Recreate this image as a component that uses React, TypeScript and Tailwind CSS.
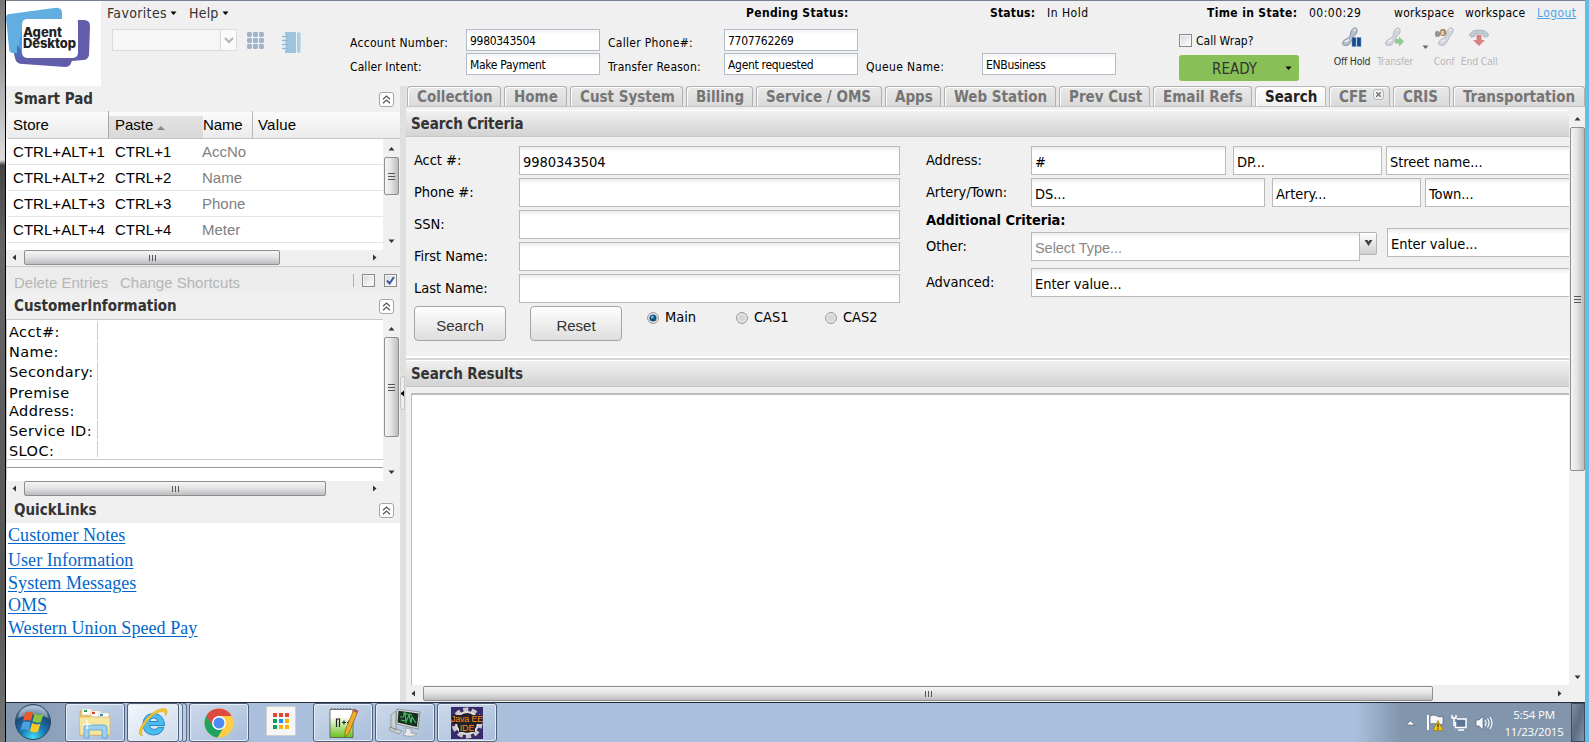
import React from "react";

const TAHOMA = "font-['DejaVu_Sans_Condensed','DejaVu_Sans',sans-serif]";
const ARIAL = "font-['Liberation_Sans',sans-serif]";

type ArrowDir = "up" | "down" | "left" | "right";

function Arrow({ dir, className = "" }: { dir: ArrowDir; className?: string }) {
  const points = {
    up: "0.5,5.5 3.5,2 6.5,5.5",
    down: "0.5,1.5 3.5,5 6.5,1.5",
    left: "5,0.5 1.5,3.5 5,6.5",
    right: "2,0.5 5.5,3.5 2,6.5",
  }[dir];
  return (
    <svg width="7" height="7" viewBox="0 0 7 7" className={`block shrink-0 ${className}`}>
      <polygon points={points} fill="currentColor" />
    </svg>
  );
}

function VScroll({ className, thumb }: { className: string; thumb: string }) {
  return (
    <div className={`flex w-[16px] shrink-0 flex-col items-center bg-[#f0f0f0] text-[#333] ${className}`}>
      <div className="flex h-[18px] shrink-0 items-center"><Arrow dir="up" /></div>
      <div className={`flex w-[15px] shrink-0 flex-col items-center justify-center gap-[2px] rounded-[2px] border border-[#8f8f8f] bg-linear-to-r from-[#f5f5f5] via-[#e2e2e4] to-[#bcbcc0] ${thumb}`}>
        <i className="h-[1px] w-[7px] bg-[#555]" />
        <i className="h-[1px] w-[7px] bg-[#555]" />
        <i className="h-[1px] w-[7px] bg-[#555]" />
      </div>
      <div className="grow" />
      <div className="flex h-[15px] shrink-0 items-center"><Arrow dir="down" /></div>
    </div>
  );
}

function HScroll({ className, thumb }: { className: string; thumb: string }) {
  return (
    <div className={`flex h-[16px] shrink-0 items-start bg-[#efefef] text-[#333] ${className}`}>
      <div className="flex h-[15px] w-[16px] shrink-0 items-center justify-center pr-[3px]"><Arrow dir="left" /></div>
      <div className={`flex h-[15px] shrink-0 items-center justify-center gap-[2px] rounded-[2px] border border-[#8f8f8f] bg-linear-to-b from-[#f5f5f5] via-[#e2e2e4] to-[#bcbcc0] ${thumb}`}>
        <i className="h-[6px] w-[1px] bg-[#555]" />
        <i className="h-[6px] w-[1px] bg-[#555]" />
        <i className="h-[6px] w-[1px] bg-[#555]" />
      </div>
      <div className="grow" />
      <div className="flex h-[15px] w-[19px] shrink-0 items-center justify-center"><Arrow dir="right" /></div>
    </div>
  );
}

function Collapse() {
  return (
    <button className="flex h-[15px] w-[15px] items-center justify-center rounded-[3px] border border-[#a5a5a5] bg-white text-[#555]">
      <svg width="9" height="9" viewBox="0 0 9 9" fill="none" stroke="currentColor" strokeWidth="1.2">
        <path d="M1 4.3 4.5 1 8 4.3M1 8.3 4.5 5 8 8.3" />
      </svg>
    </button>
  );
}

function PanelTitle({ children, className }: { children: string; className: string }) {
  return (
    <div className={`flex shrink-0 items-center justify-between bg-[#f0f0f0] pr-[6px] pl-[8px] text-[15px] font-bold text-[#333] ${className}`}>
      <h2>{children}</h2>
      <Collapse />
    </div>
  );
}

function Check({ on = false }: { on?: boolean }) {
  return (
    <span className="flex h-[13px] w-[13px] shrink-0 items-center justify-center border border-[#8a8a8a] bg-linear-to-br from-[#d5d8dc] to-white shadow-[inset_0_0_0_1px_#f4f4f4]">
      {on && (
        <svg width="9" height="9" viewBox="0 0 9 9" fill="none" stroke="#3a56a0" strokeWidth="2">
          <path d="M1 4.5 3.6 7.5 8 1" />
        </svg>
      )}
    </span>
  );
}

function CallField({ children }: { children?: string }) {
  return (
    <div className="h-[22px] w-[134px] shrink-0 border border-[#b3bdc9] bg-linear-to-b from-[#f3f3f3] to-white to-25% pl-[3px] text-[12px] leading-[22px] tracking-[-0.3px] text-black">
      {children}
    </div>
  );
}

function Field({ children, className = "" }: { children?: string; className?: string }) {
  return (
    <div className={`h-[29px] shrink-0 border border-[#bababa] bg-linear-to-b from-[#ededed] to-white to-20% pl-[3px] leading-[30px] ${className}`}>
      {children}
    </div>
  );
}

function Logo() {
  return (
    <div className="relative h-[85px] w-[95px] shrink-0 bg-white">
      <svg width="95" height="85" viewBox="6 1 95 85" className="block">
        <path d="M78 20h6q6 0 6 6l-1 29q-1 5-6 5l-11 1-1 2q-1 4-6 4l-42-3q-7 0-8-6l-1-5h8l5-10 46 2z" fill="#625dab" />
        <path d="M10 14 54 8q7-1 8 4v7l-32 1q-8 0-8 7l-4 26h-5q-4 0-4-5L6 18q0-4 4-4z" fill="#62aee1" />
        <path d="M22 27q-1-6 6-7l-6 33h-5z" fill="#4aa0dc" />
        <path d="M17 45v8h-3l1 3q4 3 7 2l-1-8z" fill="#4a6fb8" />
        <rect x="22" y="19" width="56" height="39" rx="5" fill="#fff" />
      </svg>
      <div className="absolute top-[26px] left-[17px] flex flex-col font-['Inter',sans-serif] text-[13px] font-extrabold text-[#222]">
        <span className="h-[11px] leading-[11px]">Agent</span>
        <span className="h-[11px] leading-[11px] tracking-[-0.1px]">Desktop</span>
      </div>
    </div>
  );
}

function Handset({ faded = false }: { faded?: boolean }) {
  return (
    <g opacity={faded ? 0.55 : 1}>
      <path d="M11 1.5q3-2 4 .8.6 2.7-1 4.700-2 1-2.600 3-.4 2-2.400 4.500Q7.500 18.500 4 18.500 0 18.500.6 16q.6-3 3.400-4 3-.8 4-3.500Q8.500 3.500 11 1.500z" fill="#b7c1cc" stroke="#76828f" strokeWidth=".8" />
      <path d="M11.500 3q1.500-1 2 .2M3 15q2-2 4-2" stroke="#f5f8fb" strokeWidth="1.300" fill="none" />
    </g>
  );
}

function CallAction({ label, muted, className, children }: { label: string; muted?: boolean; className: string; children: React.ReactNode }) {
  return (
    <div className={`flex shrink-0 flex-col items-center ${className} ${muted ? "text-[#b9b9b9]" : "text-[#333]"}`}>
      <svg width="20" height="20" viewBox="0 0 20 20" className="block">{children}</svg>
      <span className="mt-[7px] text-[10.500px] leading-[14px] tracking-[-0.25px] whitespace-nowrap">{label}</span>
    </div>
  );
}

function Header() {
  return (
    <header className="flex h-[86px] shrink-0 border-t border-[#76808f] bg-[#f0f0f0] text-[12px] text-black">
      <Logo />
      <div className="w-[249px] shrink-0 pl-[6px]">
        <div className="flex h-[24px] items-center text-[14px] text-[#333]">
          <span className="w-[63px] tracking-[0.35px]">Favorites</span>
          <Arrow dir="down" className="text-black" />
          <span className="ml-[12px] w-[33px] tracking-[0.2px]">Help</span>
          <Arrow dir="down" className="text-black" />
        </div>
        <div className="mt-[4px] flex items-start">
          <div className="ml-[5px] h-[22px] w-[109px] border border-[#dadada] bg-[#f6f6f6]" />
          <div className="flex h-[22px] w-[16px] items-center justify-center border border-l-0 border-[#dcdcdc] bg-[#fafafa] text-[#b5b5b5]">
            <svg width="10" height="7" viewBox="0 0 10 7"><path d="M1 1 5 5 9 1" fill="none" stroke="currentColor" strokeWidth="2" /></svg>
          </div>
          <svg width="17" height="17" viewBox="0 0 17 17" className="mt-[3px] ml-[10px]" fill="#9fb3cd">
            {[0, 6, 12].map((y) => [0, 6, 12].map((x) => <rect key={`${x}-${y}`} x={x} y={y} width="4.900" height="4.900" rx="1.300" />))}
          </svg>
          <svg width="20" height="21" viewBox="0 0 20 21" className="mt-[3px] ml-[17px]">
            <path d="M4 0h11v21H4z" fill="#9cc4de" />
            <path d="M16 .5h3.500v20H16z" fill="#a9cde3" />
            <path d="M0 4.500h5M0 8.500h5M0 12.500h5M0 16.500h5" stroke="#f0f0f0" strokeWidth="3" />
            <path d="M1 4.500h5q1.500 0 1 1.200M1 8.500h5q1.500 0 1 1.200M1 12.500h5q1.500 0 1 1.200M1 16.500h5q1.500 0 1 1.200" stroke="#8db9d8" strokeWidth="1.300" fill="none" />
          </svg>
        </div>
      </div>
      <div className="w-[829px] shrink-0">
        <div className="flex h-[24px] items-center">
          <b className="ml-[396px] w-[244px] tracking-[0.35px]">Pending Status:</b>
          <b className="w-[57px] tracking-[0.2px]">Status:</b>
          <span className="tracking-[0.5px]">In Hold</span>
        </div>
        <div className="mt-[4px] flex flex-col gap-[2px] whitespace-nowrap">
          <div className="flex h-[22px] items-start leading-[29px] tracking-[0.3px]">
            <span className="w-[116px]">Account Number:</span>
            <CallField>9980343504</CallField>
            <span className="ml-[8px] w-[116px]">Caller Phone#:</span>
            <CallField>7707762269</CallField>
          </div>
          <div className="flex h-[22px] items-start leading-[29px] tracking-[0.1px]">
            <span className="w-[116px]">Caller Intent:</span>
            <CallField>Make Payment</CallField>
            <span className="ml-[8px] w-[116px] tracking-[0.2px]">Transfer Reason:</span>
            <CallField>Agent requested</CallField>
            <span className="ml-[8px] w-[116px] tracking-[0.35px]">Queue Name:</span>
            <CallField>ENBusiness</CallField>
          </div>
        </div>
      </div>
      <div className="w-[406px] shrink-0 whitespace-nowrap">
        <div className="flex h-[24px] items-center">
          <b className="ml-[28px] w-[102px] tracking-[0.35px]">Time in State:</b>
          <span className="w-[85px] tracking-[0.5px]">00:00:29</span>
          <span className="w-[71px] tracking-[0.3px]">workspace</span>
          <span className="w-[72px] tracking-[0.3px]">workspace</span>
          <a className="tracking-[0.4px] text-[#4da3e8] underline">Logout</a>
        </div>
        <div className="flex">
          <div className="w-[154px] shrink-0 pt-[7px]">
            <label className="flex h-[17px] items-center gap-[4px]"><Check />Call Wrap?</label>
            <button className="mt-[6px] flex h-[26px] w-[120px] items-center rounded-[3px] bg-[#88c057] text-[15px] text-[#333]">
              <span className="ml-[33px] w-[73px] pt-[2px] text-left">READY</span>
              <Arrow dir="down" className="text-black" />
            </button>
          </div>
          <CallAction label="Off Hold" className="mt-[2px] w-[38px]">
            <Handset />
            <path d="M10 10.500h4v9h-4zM15 10.500h4v9h-4z" fill="#174a8c" stroke="#6d9bd0" strokeWidth=".5" />
          </CallAction>
          <CallAction label="Transfer" muted className="mt-[2px] ml-[5px] w-[38px]">
            <Handset faded />
            <path d="M10 12h4v-2.500l5 5-5 5v-3h-4z" fill="#8fcb94" />
          </CallAction>
          <div className="w-[16px] shrink-0 pt-[19px] pl-[8px]"><Arrow dir="down" className="text-[#666]" /></div>
          <CallAction label="Conf" muted className="mt-[2px] ml-[2px] w-[24px]">
            <g transform="translate(4 0)"><Handset faded /></g>
            <rect x="1" y="4" width="5" height="6" rx="2" fill="#9a938c" />
            <rect x="6" y="2" width="6" height="7" rx="2" fill="#a8896d" />
            <rect x="7" y="4" width="3" height="4" fill="#e0c6aa" />
          </CallAction>
          <CallAction label="End Call" muted className="mt-[2px] ml-[4px] w-[38px]">
            <path d="M.5 8.500Q1.500 3 10 3t9.500 5.500q-1 2.500-5 1l-.5-2.500H6l-.5 2.500q-4 1.500-5-1z" fill="#c3cad2" stroke="#9ba4ae" strokeWidth=".7" />
            <path d="M7.500 8h5v5H16l-6 6-6-6h3.500z" fill="#d98282" />
          </CallAction>
        </div>
      </div>
    </header>
  );
}

const shortcuts = [
  ["CTRL+ALT+1", "CTRL+1", "AccNo"],
  ["CTRL+ALT+2", "CTRL+2", "Name"],
  ["CTRL+ALT+3", "CTRL+3", "Phone"],
  ["CTRL+ALT+4", "CTRL+4", "Meter"],
];

function SmartPad() {
  return (
    <section className="shrink-0 bg-[#f0f0f0]">
      <PanelTitle className="h-[26px]">Smart Pad</PanelTitle>
      <div className={`ml-[2px] flex h-[27px] items-end border-b border-[#c6c6c6] bg-linear-to-b from-[#fbfbfb] to-[#ebebeb] text-[15px] text-black ${ARIAL}`}>
        <div className="h-[27px] w-[101px] border-r border-[#a8a8a8] pl-[5px] leading-[27px]">Store</div>
        <div className="flex h-[22px] w-[94px] items-center bg-linear-to-b from-[#e2e2e2] to-[#d9d9d9] pb-[4px] pl-[6px]">
          Paste
          <svg width="8" height="4" viewBox="0 0 8 4" className="mt-[5px] ml-[4px]"><path d="M0 4 4 0 8 4z" fill="#888" /></svg>
        </div>
        <div className="h-[27px] w-[50px] border-r border-[#b8b8b8] leading-[27px] tracking-[-0.1px]">Name</div>
        <div className="h-[27px] pl-[5px] leading-[27px] tracking-[0.2px]">Value</div>
      </div>
      <div className="flex h-[111px]">
        <div className={`w-[377px] shrink-0 overflow-hidden bg-white text-[15px] ${ARIAL}`}>
          {shortcuts.map(([store, paste, name]) => (
            <div key={store} className="ml-[2px] flex h-[26px] border-b border-[#e4e4e4] pl-[5px] leading-[25px] text-black">
              <span className="w-[102px] tracking-[0.05px]">{store}</span>
              <span className="w-[87px]">{paste}</span>
              <span className="text-[#808080]">{name}</span>
            </div>
          ))}
        </div>
        <VScroll className="h-[110px]" thumb="h-[38px]" />
      </div>
      <HScroll className="ml-[2px] w-[376px]" thumb="w-[256px]" />
      <div className={`flex h-[27px] items-center border-t border-[#c9c9c9] bg-[#ececec] pl-[8px] text-[15px] text-[#b5b5b5] ${ARIAL}`}>
        <span className="mt-[6px] w-[106px]">Delete Entries</span>
        <span className="mt-[6px] w-[233px]">Change Shortcuts</span>
        <i className="h-[13px] w-[9px] border-l border-[#c0ab95]" />
        <Check />
        <i className="w-[9px]" />
        <Check on />
      </div>
    </section>
  );
}

const customerRows = [
  { label: "Acct#:", height: "h-[20px]" },
  { label: "Name:", height: "h-[20px]" },
  { label: "Secondary:", height: "h-[21px]" },
  { label: "Premise Address:", height: "h-[38px]" },
  { label: "Service ID:", height: "h-[20px]" },
  { label: "SLOC:", height: "h-[18px]" },
];

function CustomerInformation() {
  return (
    <section className="shrink-0 bg-[#f0f0f0]">
      <PanelTitle className="h-[26px] pt-[1px]">CustomerInformation</PanelTitle>
      <div className="flex h-[162px]">
        <div className="w-[377px] shrink-0 border-t border-l border-[#c9c9c9] bg-white pt-[2px] font-['DejaVu_Sans',sans-serif] text-[14.500px] tracking-[0.4px] text-black">
          {customerRows.map((r) => (
            <div key={r.label} className={`w-[91px] pb-[2px] pl-[2px] ${r.height}`}>
              <div className="h-full border-r border-[#ccc] leading-[18px]"><div className="pt-[1px]">{r.label}</div></div>
            </div>
          ))}
          <div className="h-[8px] border-t border-[#ccc]" />
          <div className="border-t border-[#999]" />
        </div>
        <VScroll className="h-[161px]" thumb="h-[100px]" />
      </div>
      <HScroll className="ml-[2px] w-[376px]" thumb="w-[302px]" />
    </section>
  );
}

function QuickLinks() {
  const links = [
    { text: "Customer Notes", height: "h-[25px]" },
    { text: "User Information", height: "h-[23px]" },
    { text: "System Messages", height: "h-[22px]" },
    { text: "OMS", height: "h-[23px]" },
    { text: "Western Union Speed Pay", height: "h-[23px]" },
  ];
  return (
    <section className="grow bg-white">
      <PanelTitle className="h-[26px]">QuickLinks</PanelTitle>
      <ul className="pt-[1px] pl-[2px] font-['Liberation_Serif',serif] text-[18px] leading-[22px] tracking-[0.06px] text-[#0066cc]">
        {links.map((l) => (
          <li key={l.text} className={l.height}><a className="underline underline-offset-2">{l.text}</a></li>
        ))}
      </ul>
    </section>
  );
}

const tabs = [
  { label: "Collection", width: "w-[94px]" },
  { label: "Home", width: "w-[63px]" },
  { label: "Cust System", width: "w-[113px]" },
  { label: "Billing", width: "w-[67px]" },
  { label: "Service / OMS", width: "w-[126px]" },
  { label: "Apps", width: "w-[56px]" },
  { label: "Web Station", width: "w-[112px]" },
  { label: "Prev Cust", width: "w-[91px]" },
  { label: "Email Refs", width: "w-[99px]" },
  { label: "Search", width: "w-[71px]", active: true },
  { label: "CFE", width: "w-[61px]", closable: true },
  { label: "CRIS", width: "w-[57px]" },
  { label: "Transportation", width: "w-[132px]" },
];

function Tabs() {
  return (
    <nav className="flex h-[21px] shrink-0 items-end gap-[3px] overflow-hidden border-b border-[#c4c4c4] bg-[#e6e6e6] pl-[1px] text-[15px] font-bold whitespace-nowrap">
      {tabs.map((t) => (
        <div
          key={t.label}
          className={`flex h-[20px] shrink-0 items-center rounded-t-[4px] border border-b-0 pt-[2px] pl-[9px] shadow-[inset_1px_1px_0_#fff] ${t.width} ${
            t.active ? "border-[#b8b8b8] bg-linear-to-b from-white to-[#f0f0f0] text-[#222]" : "border-[#b0b0b0] bg-linear-to-b from-[#e9e9e9] to-[#dadada] text-[#757575]"
          }`}
        >
          {t.label}
          {t.closable && (
            <span className="mb-[6px] ml-[6px] flex h-[11px] w-[11px] items-center justify-center rounded-[3px] border border-[#b5b5b5] bg-[#eee]">
              <svg width="5" height="5" viewBox="0 0 5 5" stroke="#777" strokeWidth="1.400"><path d="M0 0 5 5M5 0 0 5" /></svg>
            </span>
          )}
        </div>
      ))}
    </nav>
  );
}

function SectionTitle({ children }: { children: string }) {
  return (
    <div className="h-[27px] shrink-0 border-t border-b border-t-white border-b-[#c8c8c8] bg-linear-to-b from-[#f0f0f0] to-[#d3d3d3] pl-[5px] text-[15px] leading-[26px] font-bold tracking-[-0.1px] text-[#333]">
      {children}
    </div>
  );
}

function Radio({ label, on = false }: { label: string; on?: boolean }) {
  return (
    <label className="flex w-[89px] items-center">
      <svg width="12" height="12" viewBox="0 0 12 12" className="mt-[1px] mr-[6px]">
        <circle cx="6" cy="6" r="5.400" fill="#eee" stroke="#8f8f8f" />
        <circle cx="6" cy="6" r="3.600" fill={on ? "#174f7c" : "#d6d6d6"} />
        {on && <circle cx="5.300" cy="5" r="1.500" fill="#5fb9e8" />}
      </svg>
      {label}
    </label>
  );
}

function FormButton({ children }: { children: string }) {
  return (
    <button className={`h-[35px] w-[92px] rounded-[4px] border border-[#a5a5a5] bg-linear-to-b from-white to-[#dedede] pt-[5px] text-[15px] tracking-normal text-[#333] ${ARIAL}`}>
      {children}
    </button>
  );
}

function SearchCriteria() {
  return (
    <section className="flex h-[250px] shrink-0 flex-col border-b-[2px] border-[#d6d6d6] bg-[#f0f0f0]">
      <SectionTitle>Search Criteria</SectionTitle>
      <div className="flex grow border-b-2 border-white pt-[9px] pl-[8px] text-[14.500px] tracking-[-0.05px] text-black">
        <div className="flex w-[512px] shrink-0 flex-col">
          {["Acct #:", "Phone #:", "SSN:", "First Name:", "Last Name:"].map((label, i) => (
            <div key={label} className="flex h-[32px]">
              <span className="w-[105px] leading-[28px]">{label}</span>
              <Field className="w-[381px]">{i === 0 ? "9980343504" : ""}</Field>
            </div>
          ))}
          <div className="flex items-start">
            <FormButton>Search</FormButton>
            <i className="w-[24px]" />
            <FormButton>Reset</FormButton>
            <div className="ml-[25px] flex pt-[1px]">
              <Radio label="Main" on />
              <Radio label="CAS1" />
              <Radio label="CAS2" />
            </div>
          </div>
        </div>
        <div className="flex w-[643px] shrink-0 flex-col overflow-hidden whitespace-nowrap">
          <div className="flex h-[32px]">
            <span className="w-[105px] shrink-0 leading-[28px]">Address:</span>
            <Field className="w-[195px]">#</Field>
            <Field className="ml-[7px] w-[149px]">DP...</Field>
            <Field className="ml-[4px] w-[200px]">Street name...</Field>
          </div>
          <div className="flex h-[32px]">
            <span className="w-[105px] shrink-0 leading-[28px]">Artery/Town:</span>
            <Field className="w-[234px]">DS...</Field>
            <Field className="ml-[7px] w-[149px]">Artery...</Field>
            <Field className="ml-[4px] w-[200px]">Town...</Field>
          </div>
          <b className="h-[18px] leading-[20px]">Additional Criteria:</b>
          <div className="flex h-[40px] items-start">
            <span className="w-[105px] shrink-0 leading-[36px]">Other:</span>
            <Field className={`mt-[4px] w-[329px] text-[#888] ${ARIAL}`}>Select Type...</Field>
            <div className="mt-[4px] flex h-[23px] w-[17px] shrink-0 items-center justify-center rounded-r-[2px] border border-l-0 border-[#b5b5b5] bg-linear-to-b from-white to-[#d0d0d0] pb-[2px] text-[#444]">
              <svg width="9" height="6" viewBox="0 0 9 6"><path d="M.5 0h3l1 1.500L5.500 0h3l-4 6z" fill="currentColor" /></svg>
            </div>
            <Field className="ml-[10px] w-[200px]">Enter value...</Field>
          </div>
          <div className="flex h-[32px]">
            <span className="w-[105px] shrink-0 leading-[28px]">Advanced:</span>
            <Field className="w-[560px]">Enter value...</Field>
          </div>
        </div>
      </div>
    </section>
  );
}

function TaskButton({ children, active, className = "" }: { children: React.ReactNode; active?: boolean; className?: string }) {
  return (
    <div className={`flex h-[39px] shrink-0 items-center justify-center rounded-[3px] border border-[#4f6076] shadow-[inset_0_0_0_1px_#e4edf8] ${active ? "bg-linear-to-br from-[#f4f7fb] to-[#cddbec]" : "bg-linear-to-br from-[#ccd9ea] to-[#a9bedb]"} ${className}`}>
      {children}
    </div>
  );
}

function StartOrb() {
  return (
    <svg width="38" height="38" viewBox="0 0 38 38">
      <defs>
        <radialGradient id="orb" cx=".5" cy=".95" r=".9">
          <stop offset="0" stopColor="#3ee0f8" />
          <stop offset=".4" stopColor="#1a78b4" />
          <stop offset=".75" stopColor="#1d4a78" />
          <stop offset="1" stopColor="#8fa9c4" />
        </radialGradient>
      </defs>
      <circle cx="19" cy="19" r="17.500" fill="url(#orb)" stroke="#2b4666" />
      <path d="M4 15Q6 3.500 19 3t15 12q-8-4-15-3.500T4 15z" fill="#fff" opacity=".35" />
      <path d="M11 10q4-2.500 8 0l-2 8q-4-2-8 0z" fill="#ea5a2a" />
      <path d="M20.500 10.500q4 2.500 9 .5l-2.500 8q-4 1.500-8.500-.5z" fill="#8cc63e" />
      <path d="M8.500 19.500q4-2 8 0l-2 8q-4-2.500-8 0z" fill="#4f9fe0" />
      <path d="M18 20q4.500 2.500 8.500.5l-2.500 8q-4 2-8-.5z" fill="#fcc923" />
    </svg>
  );
}

function Taskbar() {
  const grid = ["#ea4335", "#ea4335", "#ea4335", "#119d58", "#1a8cff", "#fbb400", "#119d58", "#fbb400", "#fbb400"];
  return (
    <footer className="flex h-[40px] shrink-0 border-t border-[#222c3a] bg-[linear-gradient(to_right,#8598b0_0px,#8fa3bd_58px,#a9bfdc_64px,#a9bfdc_1350px,#8195ac_1395px,#8195ac_100%)]">
      <div className="w-[59px] shrink-0 pl-[8px]"><StartOrb /></div>
      <TaskButton className="w-[60px]">
        <svg width="34" height="32" viewBox="0 0 34 32">
          <path d="M2 4h11l2 3h16v21H2z" fill="#e8c76a" stroke="#c3a049" strokeWidth=".7" />
          <path d="M4 2h10v6H4zM13 4h10v6H13zM21 6h10v6H21z" fill="#fff" stroke="#d0c9a5" strokeWidth=".6" />
          <path d="M6 3h3v2H6z" fill="#25a550" /><path d="M14 5h3v2h-3z" fill="#d6432e" /><path d="M22 7h3v2h-3z" fill="#2d8fd8" />
          <path d="M1 10h31v18H2z" fill="#f7e6a2" stroke="#d5b45c" strokeWidth=".7" />
          <path d="M6 31V21q0-3 3-3h17q3 0 3 3v10h-5v-8H11v8z" fill="#9bd0ee" stroke="#5b9fce" strokeWidth=".8" />
          <path d="M9 13v9M5 17.500h8" stroke="#fff" strokeWidth="1.200" />
        </svg>
      </TaskButton>
      <TaskButton active className="ml-[2px] w-[52px]">
        <svg width="32" height="32" viewBox="0 0 32 32">
          <path fillRule="evenodd" d="M16 6.500C23 6.500 27.500 11 27.500 18.500H12.500Q13 22.500 17 22.500q2.800 0 4-2.200h6Q24.500 28 16.500 28 6 27.500 6 17 6.500 7 16 6.500zm-3.500 8h8.200q-.5-3.600-4-3.600-3.600 0-4.200 3.600z" fill="#4bbcf0" stroke="#1c7fc0" strokeWidth=".9" />
          <path d="M5.500 29Q-1 28 5 18 12 6 22 2.500q7-2.500 8 1 .6 2.500-1.500 5.500 0-5-4-4.500-7.500 1-14.500 10Q2.500 25 5.500 29z" fill="#f5c52b" stroke="#d59b12" strokeWidth=".5" />
        </svg>
      </TaskButton>
      <i className="h-[39px] w-[4px] rounded-r-[3px] border border-l-0 border-[#5d6f87] bg-[#d5e0ee]" />
      <i className="h-[39px] w-[4px] rounded-r-[3px] border border-l-0 border-[#5d6f87] bg-[#b9cbe2]" />
      <TaskButton className="ml-[2px] w-[60px]">
        <svg width="30" height="30" viewBox="0 0 30 30">
          <circle cx="15" cy="15" r="14.500" fill="#ffcd46" />
          <path d="M15 15 2.400 7.750A14.500 14.500 0 0 0 13.500 29.430L20.500 18z" fill="#1da462" />
          <path d="M15 8H27.600A14.500 14.500 0 0 0 2.400 7.750L9 18.500z" fill="#dd4b3e" />
          <circle cx="15" cy="15" r="7" fill="#fff" />
          <circle cx="15" cy="15" r="5.500" fill="#4c8bf5" />
        </svg>
      </TaskButton>
      <div className="flex w-[64px] shrink-0 items-start pt-[3px] pl-[17px]">
        <div className="grid h-[30px] w-[30px] grid-cols-[6px_6px_6px] content-center justify-center rounded-[2px] border border-[#d0d0d0] bg-[#f6f6f6]">
          {grid.map((c, i) => <i key={i} className="h-[6px] border border-[#f6f6f6] bg-clip-padding" style={{ background: c }} />)}
        </div>
      </div>
      <TaskButton className="w-[60px]">
        <svg width="32" height="32" viewBox="0 0 32 32">
          <defs><linearGradient id="pad" x2="0" y2="1"><stop offset=".25" stopColor="#fff" /><stop offset="1" stopColor="#69c21d" /></linearGradient></defs>
          <path d="M3 2.500h23v28H3z" fill="url(#pad)" stroke="#555" strokeWidth=".8" />
          <path d="M4 2h21" stroke="#777" strokeWidth="2" strokeDasharray="1.500 1.500" />
          <path d="M9.500 20v-8h3v8M15 15.500h4M17 13.500v4M20 15.500h4M22 13.500v4" stroke="#222" strokeWidth="1.200" fill="none" />
          <path d="M27 2l4 2-9 22-4 4 0-6z" fill="#f0ad28" stroke="#8a5d10" strokeWidth=".7" />
          <path d="M27 2l4 2-1 2-4-2z" fill="#b4575a" />
        </svg>
      </TaskButton>
      <TaskButton className="ml-[2px] w-[60px]">
        <svg width="32" height="30" viewBox="0 0 32 30">
          <path d="M2 7 7 3v19l-5-2zM1 19l12 4-3 3-10-4z" fill="#ccd1d3" stroke="#777" strokeWidth=".6" />
          <path d="M8 1 31 4 29 21 7 16z" fill="#d9dddd" stroke="#777" strokeWidth=".7" />
          <path d="M9.500 2.800 29.500 5.500 28 19 8.500 14.500z" fill="#173022" />
          <path d="M11 9h3l2-4 1 9 3-7 2 8 1-6 4 6M12 12l4 1M14 5l9 2" stroke="#46c45c" strokeWidth="1.100" fill="none" />
          <path d="M16 20l6 1v4l6 1q-4 4-14 1l3-3z" fill="#e8ebec" stroke="#888" strokeWidth=".6" />
        </svg>
      </TaskButton>
      <TaskButton className="ml-[2px] w-[60px]">
        <div className="relative h-[32px] w-[32px] bg-[#39286a]">
          <svg width="32" height="32" viewBox="0 0 32 32">
            <circle cx="16" cy="16" r="13.500" fill="none" stroke="#c8c8c8" strokeWidth="4" strokeDasharray="5.200 3.280" />
            <circle cx="16" cy="16" r="11" fill="#232026" stroke="#dcdcdc" strokeWidth="2" />
            <path d="M1 8h30v9H1zM8 17h16v8H8z" fill="#232026" />
          </svg>
          <div className="absolute top-[8px] left-0 flex w-[32px] flex-col items-center font-['Liberation_Sans',sans-serif] text-[9px] tracking-[-0.2px] whitespace-nowrap text-[#ff8a1c]">
            <span className="h-[9px] leading-[9px]">Java EE</span>
            <span className="h-[9px] leading-[9px]">IDE</span>
          </div>
        </div>
      </TaskButton>
      <div className="grow" />
      <div className="flex items-center pr-[7px] text-white">
        <svg width="90" height="18" viewBox="0 0 90 18" className="mr-[11px]">
          <path d="M3 11 7.500 7 12 11z" fill="#fff" stroke="#43536a" strokeWidth=".6" />
          <path d="M25 1v15" stroke="#fff" strokeWidth="2" />
          <path d="M27 2q4-2 7 0t6 0v8q-3 1-6 0t-7 0z" fill="#f6f9fc" stroke="#43536a" strokeWidth=".6" />
          <path d="M35 6.500 40 16.500H30z" fill="#fcc917" stroke="#9a7410" strokeWidth=".7" />
          <path d="M35 9.500v4M35 14.300v1.200" stroke="#222" strokeWidth="1.200" />
          <path d="M54 5h9v8.500H52.500V8" fill="#5d7594" stroke="#fff" strokeWidth="1.500" />
          <path d="M49 1v3h4V1M51 4v8M55 16h6" stroke="#fff" strokeWidth="1.500" fill="none" />
          <path d="M73 6h3l4-4v14l-4-4h-3z" fill="#f4f7fa" stroke="#43536a" strokeWidth=".6" />
          <path d="M82 6q2 3 0 6M84.500 4.500q3 4.500 0 9M87 3q4 6 0 12" stroke="#fff" strokeWidth="1.100" fill="none" />
        </svg>
        <div className="flex w-[60px] flex-col items-center font-['Open_Sans',sans-serif] text-[11.500px] leading-[17px] tracking-[-0.2px] whitespace-nowrap">
          <span>5:54 PM</span>
          <span>11/23/2015</span>
        </div>
      </div>
      <div className="w-[14px] shrink-0 border border-[#3e4c5f] bg-linear-to-br from-[#7e8ea1] via-[#5d6c80] to-[#8394aa]" />
    </footer>
  );
}

export default function App() {
  return (
    <div className={`flex h-[742px] w-[1589px] overflow-hidden bg-[#f0f0f0] ${TAHOMA}`}>
      <div className="w-[6px] shrink-0 border-r border-black bg-[linear-gradient(to_bottom,#777_0px,#ddd_160px,#444_165px,#666_250px,#555_600px,#777_742px)]" />
      <div className="flex w-[1579px] shrink-0 flex-col">
        <Header />
        <div className="flex h-[616px] shrink-0">
          <aside className="flex w-[394px] shrink-0 flex-col">
            <SmartPad />
            <CustomerInformation />
            <QuickLinks />
          </aside>
          <div className="flex w-[6px] shrink-0 flex-col justify-center bg-[#dfdfdf]">
            <div className="mb-[2px] flex h-[34px] w-[5px] items-center rounded-l-[3px] border border-[#c5c5c5] bg-[#eee] text-black">
              <Arrow dir="left" className="-ml-[2px]" />
            </div>
          </div>
          <main className="flex w-[1179px] shrink-0 flex-col">
            <Tabs />
            <div className="flex h-[578px] shrink-0 pt-[2px]">
              <div className="flex w-[1163px] shrink-0 flex-col overflow-hidden pt-[1px]">
                <SearchCriteria />
                <SectionTitle>Search Results</SectionTitle>
                <div className="mt-[6px] ml-[5px] grow border-t-2 border-l border-[#bcbcbc] bg-white" />
              </div>
              <VScroll className="h-[576px]" thumb="h-[344px]" />
            </div>
            <HScroll className="mt-[1px] w-[1163px] pl-[1px]" thumb="w-[1010px]" />
          </main>
        </div>
        <Taskbar />
      </div>
      <div className="w-[4px] shrink-0 bg-[#62bfe8]" />
    </div>
  );
}
